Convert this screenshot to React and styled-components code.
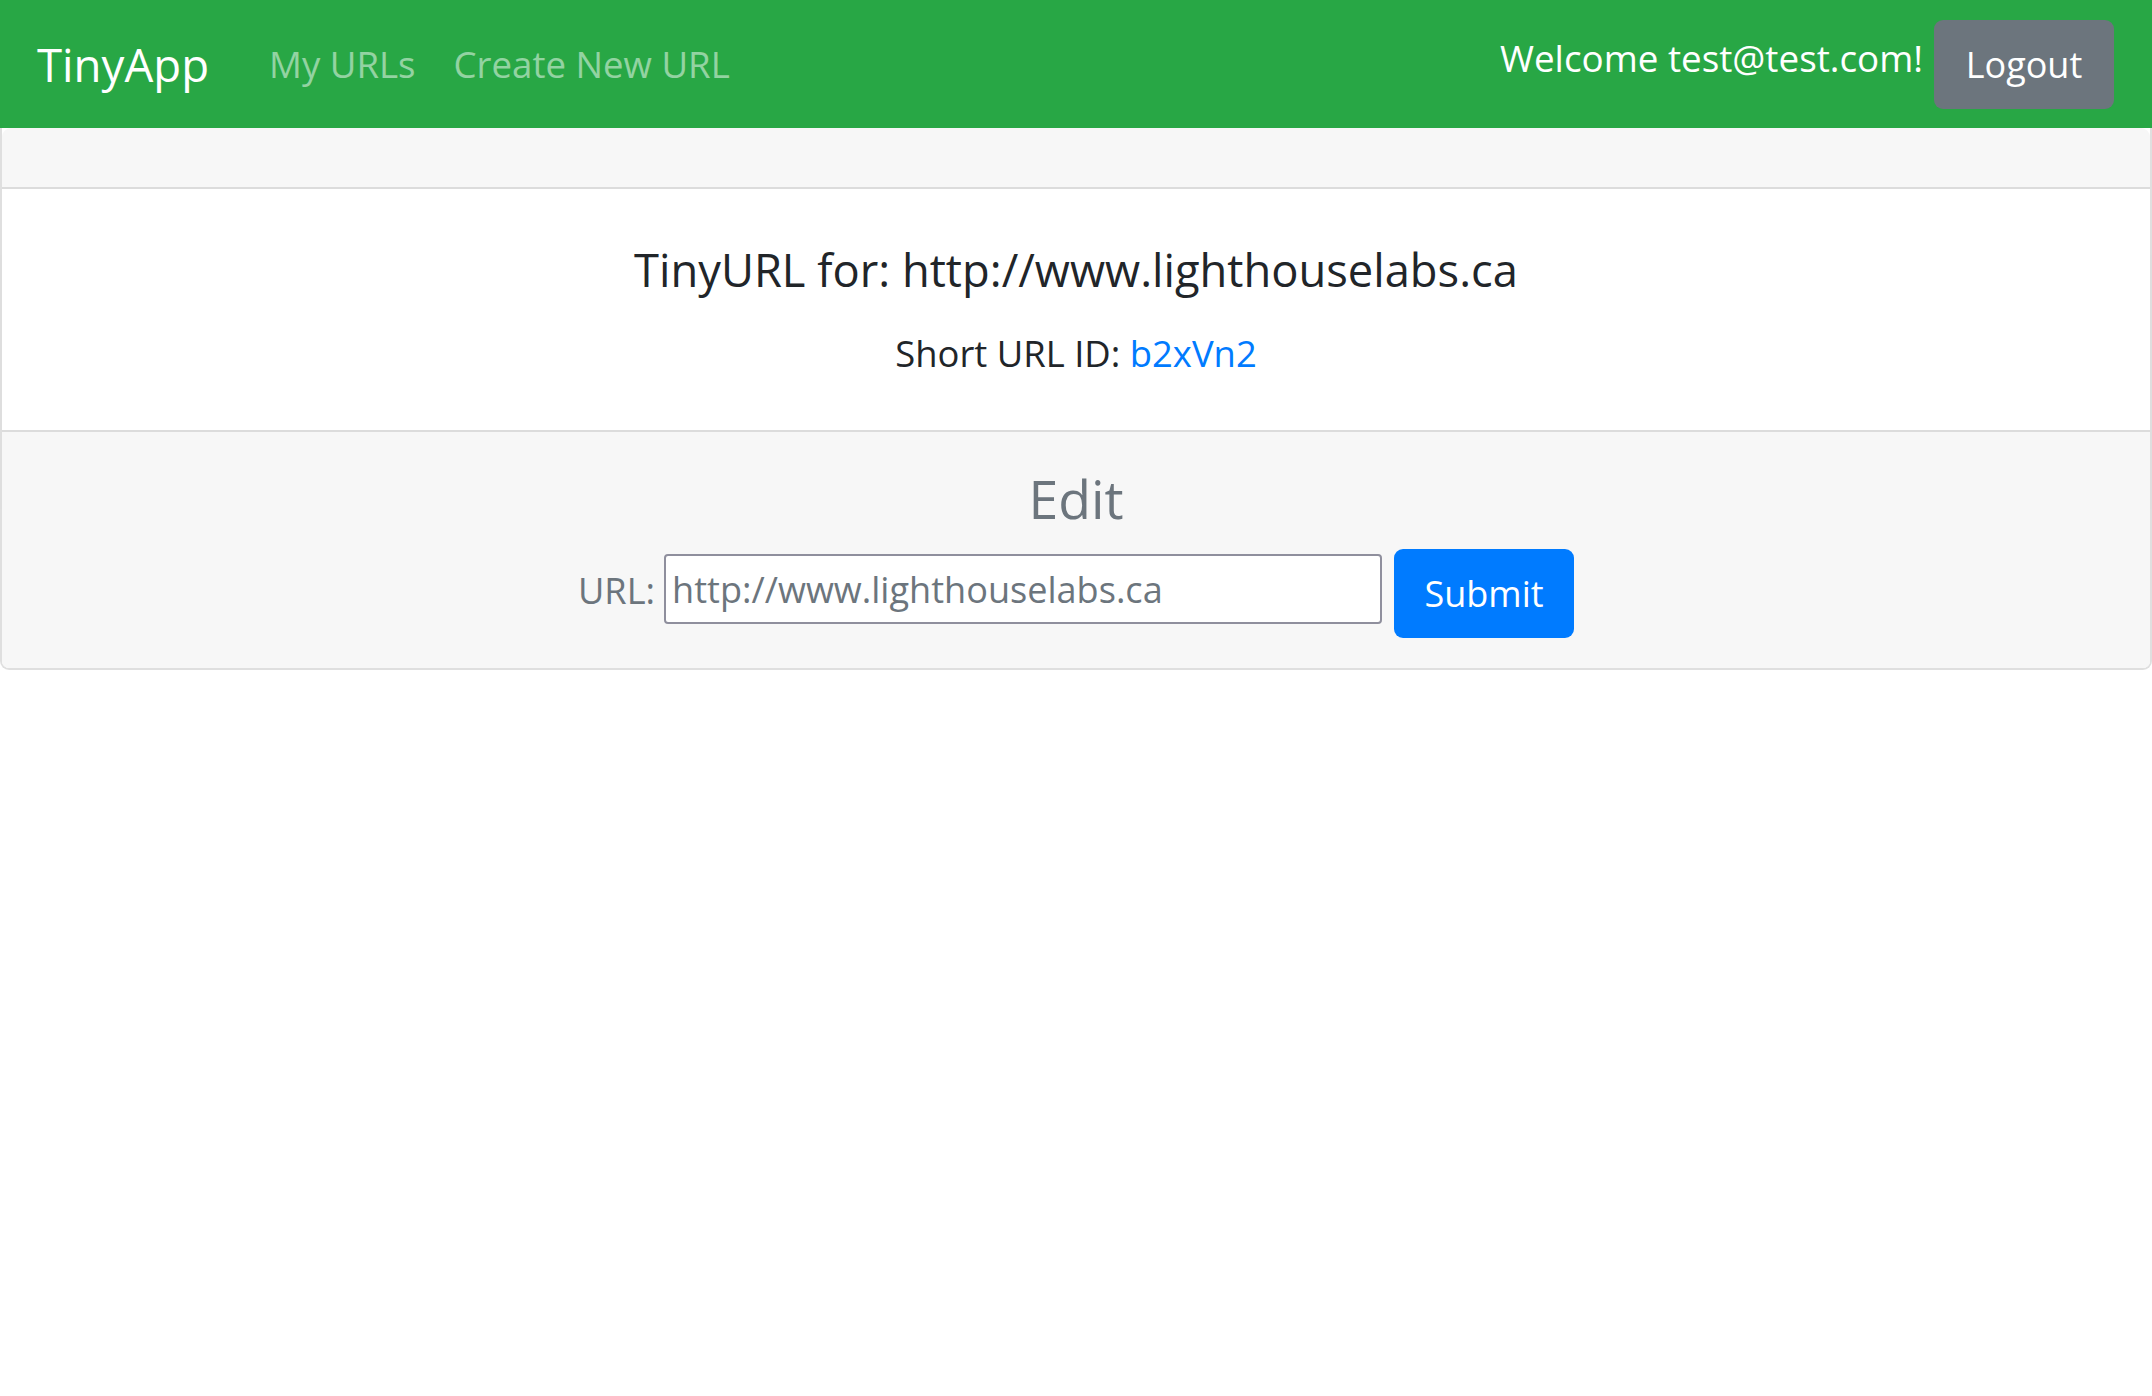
import React from "react";
import styled, { createGlobalStyle } from "styled-components";

const GlobalStyle = createGlobalStyle`
  html, body {
    margin: 0;
    padding: 0;
    background: #ffffff;
  }
  body {
    font-family: "Open Sans", "Noto Sans", "DejaVu Sans", sans-serif;
    color: #212529;
  }
  * {
    box-sizing: border-box;
  }
`;

const Navbar = styled.nav`
  display: flex;
  align-items: center;
  height: 128px;
  padding: 0 38px 0 37px;
  background: #28a745;
`;

const Brand = styled.a`
  font-size: 45.6px;
  line-height: 72px;
  color: #ffffff;
  margin-right: 41px;
  text-decoration: none;
`;

const NavLinks = styled.div`
  display: flex;
  align-items: center;
`;

const NavLink = styled.a`
  font-size: 36.6px;
  line-height: 58px;
  padding: 0 19px;
  color: rgba(255, 255, 255, 0.5);
  text-decoration: none;
`;

const Spacer = styled.div`
  flex: 1;
`;

const Welcome = styled.span`
  font-size: 36.8px;
  line-height: 58px;
  color: #ffffff;
  margin-right: 11px;
  margin-bottom: 12px;
`;

const Button = styled.button`
  display: flex;
  align-items: center;
  justify-content: center;
  width: 180px;
  height: 89px;
  border: none;
  border-radius: 9px;
  font-family: inherit;
  font-size: 36px;
  color: #ffffff;
  background: ${(p) => p.$bg};
  cursor: pointer;
`;

const Card = styled.div`
  border: 2px solid rgba(0, 0, 0, 0.125);
  border-top: none;
  border-radius: 0 0 9px 9px;
  text-align: center;
  overflow: hidden;
`;

const CardHeader = styled.div`
  height: 61px;
  background: #f7f7f7;
  border-bottom: 2px solid #dcdcdc;
  border-radius: 9px 9px 0 0;
`;

const CardBody = styled.div`
  padding: 48px 24px;
  background: #ffffff;
`;

const CardTitle = styled.h5`
  margin: 4px 0 25px;
  font-size: 45.3px;
  line-height: 58px;
  font-weight: 400;
  color: #212529;
`;

const CardText = styled.p`
  margin: 0;
  font-size: 36.4px;
  line-height: 58px;
  color: #212529;
`;

const IdLink = styled.a`
  color: #007bff;
  text-decoration: none;
`;

const CardFooter = styled.div`
  padding: 29px 24px 30px;
  background: #f7f7f7;
  border-top: 2px solid #dcdcdc;
`;

const EditTitle = styled.h4`
  margin: 3px 0 16px;
  font-size: 53.5px;
  line-height: 69px;
  font-weight: 400;
  color: #6c757d;
`;

const EditForm = styled.form`
  display: flex;
  align-items: center;
  justify-content: center;
`;

const Label = styled.label`
  font-size: 36.2px;
  line-height: 58px;
  color: #6c757d;
  margin-right: 9px;
  margin-top: -7px;
`;

const UrlInput = styled.input`
  width: 718px;
  height: 70px;
  margin: -10px 12px 0 0;
  padding: 0 6px;
  border: 2px solid #8f8f9d;
  border-radius: 4px;
  background: #ffffff;
  font-family: inherit;
  font-size: 36.1px;
  color: #6c757d;
  outline: none;
`;

function App() {
  return (
    <>
      <GlobalStyle />
      <Navbar>
        <Brand href="#">TinyApp</Brand>
        <NavLinks>
          <NavLink href="#">My URLs</NavLink>
          <NavLink href="#">Create New URL</NavLink>
        </NavLinks>
        <Spacer />
        <Welcome>Welcome test@test.com!</Welcome>
        <Button $bg="#6c757d" type="button">
          Logout
        </Button>
      </Navbar>
      <Card>
        <CardHeader />
        <CardBody>
          <CardTitle>TinyURL for: http://www.lighthouselabs.ca</CardTitle>
          <CardText>
            Short URL ID: <IdLink href="#">b2xVn2</IdLink>
          </CardText>
        </CardBody>
        <CardFooter>
          <EditTitle>Edit</EditTitle>
          <EditForm onSubmit={(e) => e.preventDefault()}>
            <Label htmlFor="longURL">URL:</Label>
            <UrlInput
              id="longURL"
              type="text"
              defaultValue="http://www.lighthouselabs.ca"
            />
            <Button $bg="#007bff" type="submit">
              Submit
            </Button>
          </EditForm>
        </CardFooter>
      </Card>
    </>
  );
}

export default App;
